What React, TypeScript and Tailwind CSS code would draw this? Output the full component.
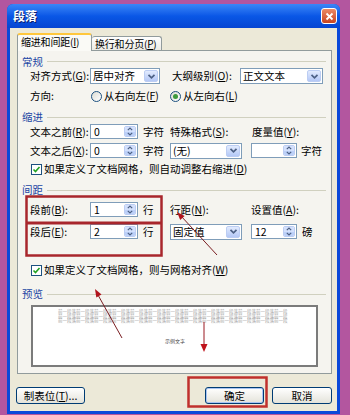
import React from 'react';
import clsx from 'clsx';

const Key = ({ c }: { c: string }) => <span className="underline underline-offset-1">{c}</span>;

const Chev = ({ up = false, small = false }: { up?: boolean; small?: boolean }) => (
  <svg width={small ? 6 : 9} height={small ? 4 : 7} viewBox={small ? '0 0 6 4' : '0 0 9 7'}>
    {small ? (
      <path d={up ? 'M0.8 3.2 L3 1 L5.2 3.2' : 'M0.8 0.8 L3 3 L5.2 0.8'} fill="none" stroke="#4d6185" strokeWidth="1.2" />
    ) : (
      <path d="M1.5 1.8 L4.5 4.8 L7.5 1.8" fill="none" stroke="#4d6185" strokeWidth="1.7" />
    )}
  </svg>
);

function Combo({ w, children }: { w: string; children: React.ReactNode }) {
  return (
    <div className={clsx('flex h-[16px] shrink-0 border border-[#7f9db9] bg-white', w)}>
      <div className="flex-1 pl-[2px] leading-[14px] whitespace-nowrap">{children}</div>
      <div className="m-[1px] flex w-[14px] items-center justify-center rounded-[2px] border border-[#bccdf3] bg-linear-to-b from-[#e2ebfe] to-[#b4c8f6]">
        <Chev />
      </div>
    </div>
  );
}

function Spin({ w, value }: { w: string; value: string }) {
  return (
    <div className={clsx('flex h-[15px] shrink-0 border border-[#7f9db9] bg-white', w)}>
      <div className="flex-1 pl-[3px] leading-[13px]">{value}</div>
      <div className="m-[1px] flex w-[12px] flex-col overflow-hidden rounded-[2px] border border-[#bccdf3]">
        <div className="flex flex-1 items-center justify-center bg-[#d3e0fc]">
          <Chev up small />
        </div>
        <div className="flex flex-1 items-center justify-center bg-[#bcd0f8]">
          <Chev small />
        </div>
      </div>
    </div>
  );
}

const Radio = ({ checked = false }: { checked?: boolean }) => (
  <div className="flex h-[11px] w-[11px] shrink-0 items-center justify-center rounded-full border border-[#1c5180] bg-linear-to-br from-[#dcdcd4] to-white">
    {checked && <div className="h-[5px] w-[5px] rounded-full bg-[#3d9a3d]" />}
  </div>
);

const Check = () => (
  <div className="flex h-[11px] w-[11px] shrink-0 items-center justify-center border border-[#1c5180] bg-white">
    <svg width="9" height="9" viewBox="0 0 9 9">
      <path d="M1.5 4.5 L3.5 6.5 L7.5 2" fill="none" stroke="#21a121" strokeWidth="1.6" />
    </svg>
  </div>
);

const Group = ({ title, className }: { title: string; className: string }) => (
  <div className={clsx('ml-[4px] mr-[5px] flex items-center', className)}>
    <span className="text-[#2346a4]">{title}</span>
    <div className="ml-[4px] h-px flex-1 bg-[#d0d0bf]" />
  </div>
);

const Btn = ({ w, children, def = false }: { w: string; children: React.ReactNode; def?: boolean }) => (
  <div
    className={clsx(
      'h-[17px] shrink-0 whitespace-nowrap rounded-[3px] border border-[#003c74] bg-linear-to-b from-white to-[#e4e3da] text-center leading-[15px]',
      def && 'shadow-[inset_0_0_0_1px_#a9c4f2]',
      w
    )}
  >
    {children}
  </div>
);

// 51 full-width characters, just fits the preview line
const preview = Array(12).fill('前一段落').join('') + '前一段';

export default function App() {
  return (
    <div className="relative h-[415px] w-[350px] overflow-hidden bg-[#b3569f] pl-[7px] pt-[4px] font-['Noto_Sans_CJK_SC','Liberation_Sans',sans-serif] text-[10.5px] text-black">
      <div className="flex h-[410px] w-[333px] flex-col rounded-t-[6px] bg-[#0a48d9]">
        {/* title bar */}
        <div className="flex h-[24px] shrink-0 items-center rounded-t-[6px] bg-linear-to-b from-[#3b86f7] via-[#0a57e6] to-[#0645d2] pl-[6px] pr-[3px]">
          <span className="flex-1 text-[12px] font-bold text-white [text-shadow:1px_1px_0_#0a1e6e]">段落</span>
          <div className="flex h-[16px] w-[16px] items-center justify-center rounded-[3px] border border-white bg-linear-to-b from-[#eb8a66] to-[#c8431e]">
            <svg width="9" height="9" viewBox="0 0 9 9">
              <path d="M1.5 1.5 L7.5 7.5 M7.5 1.5 L1.5 7.5" stroke="white" strokeWidth="1.8" />
            </svg>
          </div>
        </div>

        <div className="flex flex-1 flex-col px-[3px] pb-[3px]">
          <div className="flex flex-1 flex-col bg-[#ece9d8] pl-[7px] pr-[5px] pt-[5px]">
            {/* tabs */}
            <div className="flex h-[17px] items-start">
              <div className="relative z-10 h-[18px] w-[75px] whitespace-nowrap rounded-t-[3px] border border-b-0 border-t-2 border-[#919b9c] border-t-[#ffc73c] bg-[#fafaf6] pl-[3px] text-[10px] leading-[14px] tracking-[-0.2px]">
                缩进和间距(<Key c="I" />)
              </div>
              <div className="mt-[3px] h-[14px] w-[70px] whitespace-nowrap rounded-t-[3px] border border-b-0 border-l-0 border-[#919b9c] bg-linear-to-b from-white to-[#ecebe5] pl-[3px] text-[10px] leading-[13px] tracking-[-0.2px]">
                换行和分页(<Key c="P" />)
              </div>
            </div>

            {/* panel */}
            <div className="flex h-[324px] w-[315px] flex-col border border-[#919b9c] bg-[#f5f4ef]">
              <Group title="常规" className="mt-[4px] h-[13px]" />
              <div className="flex h-[16px] items-center">
                <span className="ml-[12px] w-[60px] shrink-0 whitespace-nowrap">
                  对齐方式(<Key c="G" />):
                </span>
                <Combo w="w-[70px]">居中对齐</Combo>
                <span className="ml-[12px] w-[68px] shrink-0 whitespace-nowrap">
                  大纲级别(<Key c="O" />):
                </span>
                <Combo w="w-[83px]">正文文本</Combo>
              </div>
              <div className="mt-[4px] flex h-[16px] items-center">
                <span className="ml-[12px] w-[61px] shrink-0">方向:</span>
                <div className="flex w-[79px] shrink-0 items-center gap-[2px]">
                  <Radio />
                  <span className="whitespace-nowrap">
                    从右向左(<Key c="F" />)
                  </span>
                </div>
                <div className="flex items-center gap-[2px]">
                  <Radio checked />
                  <span className="whitespace-nowrap">
                    从左向右(<Key c="L" />)
                  </span>
                </div>
              </div>

              <Group title="缩进" className="mt-[6px] h-[14px]" />
              <div className="flex h-[15px] items-center">
                <span className="ml-[12px] w-[60px] shrink-0 whitespace-nowrap">
                  文本之前(<Key c="R" />):
                </span>
                <Spin w="w-[48px]" value="0" />
                <span className="ml-[5px] w-[27px] shrink-0">字符</span>
                <span className="w-[82px] shrink-0 whitespace-nowrap">
                  特殊格式(<Key c="S" />):
                </span>
                <span className="whitespace-nowrap">
                  度量值(<Key c="Y" />):
                </span>
              </div>
              <div className="mt-[4px] flex h-[15px] items-center">
                <span className="ml-[12px] w-[60px] shrink-0 whitespace-nowrap">
                  文本之后(<Key c="X" />):
                </span>
                <Spin w="w-[48px]" value="0" />
                <span className="ml-[5px] w-[27px] shrink-0">字符</span>
                <Combo w="w-[72px] h-[15px]">(无)</Combo>
                <div className="ml-[9px]">
                  <Spin w="w-[46px]" value="" />
                </div>
                <span className="ml-[4px]">字符</span>
              </div>
              <div className="mt-[4px] flex h-[14px] items-center">
                <div className="ml-[13px]">
                  <Check />
                </div>
                <span className="ml-[2px] whitespace-nowrap">
                  如果定义了文档网格，则自动调整右缩进(<Key c="D" />)
                </span>
              </div>

              <Group title="间距" className="mt-[7px] h-[14px]" />
              <div className="mt-[5px] flex h-[15px] items-center">
                <span className="ml-[12px] w-[60px] shrink-0 whitespace-nowrap">
                  段前(<Key c="B" />):
                </span>
                <Spin w="w-[48px]" value="1" />
                <span className="ml-[5px] w-[27px] shrink-0">行</span>
                <span className="w-[81px] shrink-0 whitespace-nowrap">
                  行距(<Key c="N" />):
                </span>
                <span className="whitespace-nowrap">
                  设置值(<Key c="A" />):
                </span>
              </div>
              <div className="mt-[7px] flex h-[15px] items-center">
                <span className="ml-[12px] w-[60px] shrink-0 whitespace-nowrap">
                  段后(<Key c="E" />):
                </span>
                <Spin w="w-[48px]" value="2" />
                <span className="ml-[5px] w-[27px] shrink-0">行</span>
                <Combo w="w-[72px] h-[15px]">固定值</Combo>
                <div className="ml-[9px]">
                  <Spin w="w-[46px]" value="12" />
                </div>
                <span className="ml-[5px]">磅</span>
              </div>
              <div className="mt-[24px] flex h-[14px] items-center">
                <div className="ml-[13px]">
                  <Check />
                </div>
                <span className="ml-[2px] whitespace-nowrap">
                  如果定义了文档网格，则与网格对齐(<Key c="W" />)
                </span>
              </div>

              <Group title="预览" className="mt-[10px] h-[14px]" />
              <div className="ml-[13px] mt-[4px] flex h-[62px] w-[287px] flex-col border-2 border-[#7b7b7b] bg-white">
                <div className="ml-[25px] mt-[2px] flex flex-col text-[4.5px] leading-[4.5px] text-[#a4a4a4]">
                  <span className="whitespace-nowrap">{preview}</span>
                  <span className="whitespace-nowrap">{preview}</span>
                  <span className="whitespace-nowrap">{preview}</span>
                </div>
                <span className="ml-[132px] mt-[15px] text-[5px] leading-[5px] text-[#444]">示例文字</span>
              </div>
            </div>

            {/* buttons */}
            <div className="mt-[13px] flex items-center">
              <div className="-ml-[1px]">
                <Btn w="w-[69px]">
                  制表位(<Key c="T" />)...
                </Btn>
              </div>
              <div className="flex-1" />
              <Btn w="w-[59px]" def>
                确定
              </Btn>
              <div className="ml-[8px]">
                <Btn w="w-[60px]">取消</Btn>
              </div>
            </div>
          </div>
        </div>
      </div>

      {/* red annotations */}
      <svg className="pointer-events-none absolute left-0 top-0" width="350" height="415" viewBox="0 0 350 415">
        <rect x="26.5" y="196.5" width="135" height="59" fill="none" stroke="#a8262c" strokeWidth="2.5" />
        <line x1="26" y1="223" x2="162" y2="223" stroke="#a8262c" strokeWidth="3" />
        <rect x="188.5" y="377.5" width="78" height="29" fill="none" stroke="#c0302c" strokeWidth="2.5" />
        <line x1="122" y1="338" x2="98" y2="295" stroke="#7a1e22" strokeWidth="1" />
        <polygon points="95,289 101.5,294.6 96.3,297.4" fill="#b0141c" />
        <line x1="217" y1="255" x2="181" y2="216" stroke="#7a1e22" strokeWidth="1" />
        <polygon points="177,212 184.6,215.9 180.2,219.9" fill="#b0141c" />
        <line x1="204" y1="322" x2="204" y2="345" stroke="#9a1820" strokeWidth="1" />
        <polygon points="204,352 200.5,344 207.5,344" fill="#c0141c" />
      </svg>
    </div>
  );
}
